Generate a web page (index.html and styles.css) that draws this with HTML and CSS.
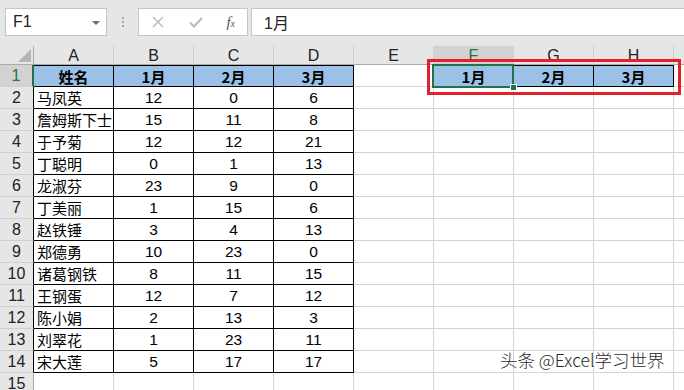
FILE: index.html
```html
<!DOCTYPE html>
<html lang="zh-CN">
<head>
<meta charset="utf-8">
<link rel="stylesheet" href="styles.css">
</head>
<body>
<div class="app">
  <div class="fbar">
    <div class="namebox">
      <span class="nb-text">F1</span>
      <span class="nb-arrow"></span>
    </div>
    <div class="dots"><i></i><i></i><i></i></div>
    <div class="fbtns">
      <svg class="ico" width="14" height="14" viewBox="0 0 14 14"><path d="M2 2 L12 12 M12 2 L2 12" stroke="#b8b8b8" stroke-width="1.4" fill="none"/></svg>
      <svg class="ico" width="16" height="14" viewBox="0 0 16 14"><path d="M2 7.5 L6 11.5 L14 3" stroke="#b8b8b8" stroke-width="2" fill="none"/></svg>
      <span class="fx">f<sub>x</sub></span>
    </div>
    <div class="finput">1月</div>
  </div>

  <div class="sheet">
    <div class="grid">
      <div class="ch corner"><span class="tri"></span></div>
      <div class="ch">A</div><div class="ch">B</div><div class="ch">C</div><div class="ch">D</div><div class="ch">E</div><div class="ch sel">F</div><div class="ch">G</div><div class="ch">H</div><div class="ch"></div>

      <div class="rh selrow">1</div>
      <div class="c b h top">姓名</div><div class="c b h top">1月</div><div class="c b h top">2月</div><div class="c b h top">3月</div><div class="c"></div>
      <div class="c b h top f1">1月<span class="active"><span class="handle"></span></span></div><div class="c b h top">2月</div><div class="c b h top">3月</div><div class="c"></div>

      <div class="rh edge">2</div><div class="c b nm">马凤英</div><div class="c b">12</div><div class="c b">0</div><div class="c b">6</div><div class="c"></div><div class="c"></div><div class="c"></div><div class="c"></div><div class="c"></div>
      <div class="rh edge">3</div><div class="c b nm">詹姆斯下士</div><div class="c b">15</div><div class="c b">11</div><div class="c b">8</div><div class="c"></div><div class="c"></div><div class="c"></div><div class="c"></div><div class="c"></div>
      <div class="rh edge">4</div><div class="c b nm">于予菊</div><div class="c b">12</div><div class="c b">12</div><div class="c b">21</div><div class="c"></div><div class="c"></div><div class="c"></div><div class="c"></div><div class="c"></div>
      <div class="rh edge">5</div><div class="c b nm">丁聪明</div><div class="c b">0</div><div class="c b">1</div><div class="c b">13</div><div class="c"></div><div class="c"></div><div class="c"></div><div class="c"></div><div class="c"></div>
      <div class="rh edge">6</div><div class="c b nm">龙淑芬</div><div class="c b">23</div><div class="c b">9</div><div class="c b">0</div><div class="c"></div><div class="c"></div><div class="c"></div><div class="c"></div><div class="c"></div>
      <div class="rh edge">7</div><div class="c b nm">丁美丽</div><div class="c b">1</div><div class="c b">15</div><div class="c b">6</div><div class="c"></div><div class="c"></div><div class="c"></div><div class="c"></div><div class="c"></div>
      <div class="rh edge">8</div><div class="c b nm">赵铁锤</div><div class="c b">3</div><div class="c b">4</div><div class="c b">13</div><div class="c"></div><div class="c"></div><div class="c"></div><div class="c"></div><div class="c"></div>
      <div class="rh edge">9</div><div class="c b nm">郑德勇</div><div class="c b">10</div><div class="c b">23</div><div class="c b">0</div><div class="c"></div><div class="c"></div><div class="c"></div><div class="c"></div><div class="c"></div>
      <div class="rh edge">10</div><div class="c b nm">诸葛钢铁</div><div class="c b">8</div><div class="c b">11</div><div class="c b">15</div><div class="c"></div><div class="c"></div><div class="c"></div><div class="c"></div><div class="c"></div>
      <div class="rh edge">11</div><div class="c b nm">王钢蛋</div><div class="c b">12</div><div class="c b">7</div><div class="c b">12</div><div class="c"></div><div class="c"></div><div class="c"></div><div class="c"></div><div class="c"></div>
      <div class="rh edge">12</div><div class="c b nm">陈小娟</div><div class="c b">2</div><div class="c b">13</div><div class="c b">3</div><div class="c"></div><div class="c"></div><div class="c"></div><div class="c"></div><div class="c"></div>
      <div class="rh edge">13</div><div class="c b nm">刘翠花</div><div class="c b">1</div><div class="c b">23</div><div class="c b">11</div><div class="c"></div><div class="c"></div><div class="c"></div><div class="c"></div><div class="c"></div>
      <div class="rh edge">14</div><div class="c b nm">宋大莲</div><div class="c b">5</div><div class="c b">17</div><div class="c b">17</div><div class="c"></div><div class="c"></div><div class="c"></div><div class="c"></div><div class="c"></div>
      <div class="rh">15</div><div class="c"></div><div class="c"></div><div class="c"></div><div class="c"></div><div class="c"></div><div class="c"></div><div class="c"></div><div class="c"></div><div class="c"></div>
    </div>
    <div class="redbox"></div>
    <div class="watermark">头条 @Excel学习世界</div>
  </div>
</div>
</body>
</html>
```

FILE: styles.css
```css
* { box-sizing: border-box; margin: 0; padding: 0; }
html, body { width: 684px; height: 390px; overflow: hidden; background: #ffffff; }
body { font-family: "Liberation Sans", "Noto Sans CJK SC", sans-serif; color: #000; }

.app { width: 684px; height: 390px; overflow: hidden; display: flex; flex-direction: column; }

.fbar {
  height: 46px; flex: none; background: #e6e6e6;
  display: flex; align-items: flex-start; padding: 8px 0 0 5px;
}
.namebox {
  width: 102px; height: 28px; background: #fff; border: 1px solid #c6c6c6;
  display: flex; align-items: center; justify-content: space-between; padding: 0 6px 0 7px;
}
.nb-text { font-size: 16px; color: #222; }
.nb-arrow { width: 0; height: 0; border-left: 4px solid transparent; border-right: 4px solid transparent; border-top: 4px solid #6b6b6b; margin-top: 1px; }
.dots { width: 31px; height: 28px; display: flex; flex-direction: column; align-items: center; justify-content: center; gap: 2px; }
.dots i { display: block; width: 2px; height: 2px; background: #a8a8a8; }
.fbtns {
  width: 110px; height: 28px; background: #fff; border: 1px solid #c6c6c6;
  display: flex; align-items: center; padding: 0 12px 0 12px; justify-content: space-between;
}
.fbtns .ico { display: block; }
.fx { font-family: "Liberation Serif", serif; font-style: italic; font-size: 15px; color: #555; line-height: 1; }
.fx sub { font-size: 10px; vertical-align: baseline; }
.finput {
  margin-left: 3px; flex: 1; height: 28px; background: #fff; border: 1px solid #c6c6c6; border-right: none;
  font-size: 16px; padding: 0 0 0 12px; display: flex; align-items: center; color: #222;
}

.sheet { position: relative; flex: 1; overflow: hidden; }
.grid {
  display: grid;
  grid-template-columns: 34px repeat(9, 80px);
  grid-template-rows: 19px repeat(15, 22px);
  width: 754px;
}
.ch {
  background: #e6e6e6; border-right: 1px solid #d0d0d0; border-bottom: 1px solid #ababab;
  font-size: 16px; color: #222; display: flex; align-items: center; justify-content: center; line-height: 1;
  padding-top: 1px;
}
.ch.sel { background: #d2d2d2; color: #217346; }
.corner { position: relative; border-right: 1px solid #ababab; }
.tri { position: absolute; right: 2px; bottom: 2px; width: 0; height: 0; border-left: 13px solid transparent; border-bottom: 13px solid #b4b4b4; }
.rh {
  background: #e6e6e6; border-right: 1px solid #ababab; border-bottom: 1px solid #d0d0d0;
  font-size: 16px; color: #222; display: flex; align-items: center; justify-content: center; line-height: 1;
}
.rh.edge { border-right-color: #000; }
.rh.selrow { background: #d2d2d2; color: #217346; border-right: 2px solid #217346; }

.c {
  border-right: 1px solid #d4d4d4; border-bottom: 1px solid #d4d4d4;
  font-size: 15.5px; line-height: 1; display: flex; align-items: center; justify-content: center; white-space: nowrap;
}
.c.b { border-right-color: #000; border-bottom-color: #000; }
.c.top { border-top: 1px solid #000; }
.c.h { background: #9bc2e6; font-weight: bold; font-family: "Noto Sans CJK SC", sans-serif; font-size: 15px; }
.c.nm { justify-content: flex-start; padding-left: 3px; font-family: "Noto Sans CJK SC", sans-serif; font-size: 15px; }

.f1 { position: relative; }
.active { position: absolute; left: -2px; top: -2px; right: -1px; bottom: -2px; border: 2px solid #217346; }
.handle { position: absolute; right: -5px; bottom: -5px; width: 7px; height: 7px; background: #217346; border: 1px solid #fff; }

.redbox { position: absolute; left: 427px; top: 13px; width: 254px; height: 36px; border: 3px solid #e4202a; pointer-events: none; }

.watermark {
  position: absolute; left: 500px; top: 303px;
  font-family: "Noto Sans CJK SC", sans-serif; font-size: 17.5px; font-weight: 300; line-height: 22px; color: #2a2a2a;
  text-shadow: 0 0 2px #fff, 0 0 2px #fff;
  white-space: nowrap;
}
```
